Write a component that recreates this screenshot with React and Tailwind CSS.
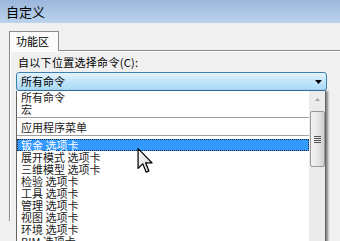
import React from "react";

const items = [
  { label: "所有命令" },
  { label: "宏" },
  { sep: true },
  { label: "应用程序菜单" },
  { sep: true },
  { label: "钣金 选项卡", selected: true },
  { label: "展开模式 选项卡" },
  { label: "三维模型 选项卡" },
  { label: "检验 选项卡" },
  { label: "工具 选项卡" },
  { label: "管理 选项卡" },
  { label: "视图 选项卡" },
  { label: "环境 选项卡" },
  { label: "BIM 选项卡" },
];

function Cursor() {
  return (
    <svg width="17" height="26" viewBox="0 0 13 21" className="absolute left-[137px] top-[148px]">
      <defs>
        <linearGradient id="cg" x1="0" y1="0" x2="1" y2="1">
          <stop offset="0" stopColor="#ffffff" />
          <stop offset="1" stopColor="#d0d0d0" />
        </linearGradient>
      </defs>
      <path
        d="M0.5 0.5 L0.5 16.5 L4.3 12.8 L7 19.5 L9.3 18.5 L6.6 12 L11.8 12 Z"
        fill="url(#cg)"
        stroke="#000"
        strokeWidth="1"
        strokeLinejoin="round"
      />
    </svg>
  );
}

export default function App() {
  return (
    <div className="relative w-[340px] h-[241px] overflow-hidden bg-[#f0f0f0] text-black font-['Noto_Sans_CJK_SC',sans-serif]">
      {/* title bar */}
      <div className="h-[23px] pl-[6px] flex items-center text-[13px] bg-gradient-to-b from-[#9bb7dc] to-[#bcd3ed]">
        自定义
      </div>

      <div className="pt-[8px] pl-[9px]">
        {/* tabs */}
        <div className="flex h-[20px]">
          <div className="w-[50px] border border-b-0 border-[#898c95] bg-[#fbfbfb] text-[11px] leading-[18px] pl-[6px]">
            功能区
          </div>
          <div className="flex-1 border-b border-[#898c95]" />
        </div>

        {/* tab page */}
        <div className="border-l border-[#898c95] h-[170px]">
          <div className="border-l border-t border-white h-full pl-[5px]">
            <div className="h-[14px] mt-[3px] text-[11px] leading-[14px] pl-[2px] tracking-[0.3px]">
              自以下位置选择命令(C):
            </div>

            {/* combo */}
            <div className="mt-[3px] w-[311px] h-[19px] rounded-[3px] border border-[#3c7fb1] bg-gradient-to-b from-[#e3f3fc] via-[#c2e5fb] to-[#a9d9f5] flex items-center justify-between pl-[4px] pr-[4px]">
              <span className="text-[11px] leading-[17px]">所有命令</span>
              <svg width="7" height="4" viewBox="0 0 7 4">
                <path d="M0 0 L7 0 L3.5 4 Z" fill="#000" />
              </svg>
            </div>

            {/* dropdown list */}
            <div className="flex w-[310px] h-[160px] bg-white border-l border-r border-[#646464] shadow-[2px_0_2px_rgba(0,0,0,0.45)]">
              <div className="flex-1 flex flex-col text-[11px] leading-[12px] text-[#1a1a1a]">
                {items.map((it, i) =>
                  it.sep ? (
                    <div key={i} className="h-[6px] pt-[2px]">
                      <div className="h-px bg-[#a0a0a0]" />
                    </div>
                  ) : (
                    <div
                      key={i}
                      className={
                        it.selected
                          ? "h-[12px] pl-[3px] bg-[#3399ff] text-white border border-dotted border-[#1c2a3a] leading-[10px]"
                          : "h-[12px] pl-[4px] whitespace-nowrap"
                      }
                    >
                      {it.label}
                    </div>
                  )
                )}
              </div>

              {/* scrollbar */}
              <div className="w-[16px] bg-[#ebebeb] flex flex-col items-center">
                <div className="h-[17px] flex items-center justify-center">
                  <svg width="5" height="3" viewBox="0 0 5 3">
                    <path d="M0 3 L2.5 0 L5 3 Z" fill="#a5a5a5" />
                  </svg>
                </div>
                <div className="mt-[3px] w-[15px] h-[56px] rounded-[2px] border border-[#979797] bg-gradient-to-r from-[#f4f4f4] via-[#e6e6e6] to-[#cfcfcf] flex flex-col items-center justify-center gap-[1px]">
                  <div className="w-[7px] h-px bg-[#555]" />
                  <div className="w-[7px] h-px bg-[#555]" />
                  <div className="w-[7px] h-px bg-[#555]" />
                  <div className="w-[7px] h-px bg-[#555]" />
                </div>
              </div>
            </div>
          </div>
        </div>
      </div>

      <Cursor />
    </div>
  );
}
